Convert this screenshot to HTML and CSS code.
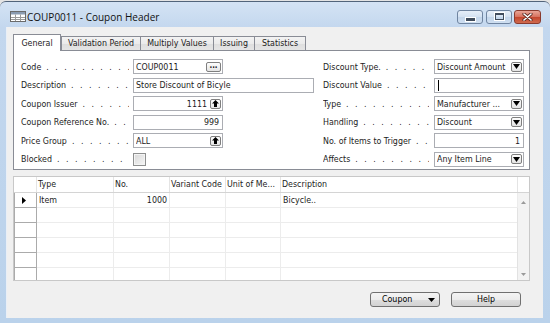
FILE: index.html
```html
<!DOCTYPE html>
<html lang="en">
<head>
    <meta charset="UTF-8">
    <meta name="viewport" content="width=device-width, initial-scale=1.0">
    <title>COUP0011 - Coupon Header</title>
    <link rel="stylesheet" href="styles.css">
</head>
<body>
    <div class="window">
        <div class="titlebar">
            <svg class="app-icon" width="16" height="11" viewBox="0 0 16 11">
                <rect x="0.5" y="0.5" width="15" height="10" fill="#fff" stroke="#6b6b6b"/>
                <rect x="1" y="1" width="14" height="2.5" fill="#8a9bb1"/>
                <path d="M1 6.5H15M1 8.5H15M5.5 3.5V10M10.5 3.5V10" stroke="#9a9a9a" stroke-width="1"/>
            </svg>
            <span class="title">COUP0011 - Coupon Header</span>
            <div class="caption">
                <span class="cap cap-min"><i></i></span>
                <span class="cap cap-max"><i></i></span>
                <span class="cap cap-close">
                    <svg width="11" height="8" viewBox="0 0 11 8">
                        <path d="M2 1L9 7M9 1L2 7" stroke="#5a2a22" stroke-width="3.2" stroke-linecap="round"/>
                        <path d="M2 1L9 7M9 1L2 7" stroke="#fff" stroke-width="1.6" stroke-linecap="round"/>
                    </svg>
                </span>
            </div>
        </div>

        <div class="client">
            <div class="tabs">
                <span class="tab active">General</span>
                <span class="tab">Validation Period</span>
                <span class="tab">Multiply Values</span>
                <span class="tab">Issuing</span>
                <span class="tab last">Statistics</span>
            </div>

            <div class="panel">
                <!-- linke Spalte -->
                <div class="col col-left">
                    <div class="row">
                        <span class="lbl">Code</span>
                        <span class="fld"><span class="v">COUP0011</span><span class="fb fb-wide">...</span></span>
                    </div>
                    <div class="row">
                        <span class="lbl">Description</span>
                        <span class="fld fld-wide"><span class="v">Store Discount of Bicyle</span></span>
                    </div>
                    <div class="row">
                        <span class="lbl">Coupon Issuer</span>
                        <span class="fld num"><span class="v">1111</span><span class="fb"><svg width="7" height="7" viewBox="0 0 7 7"><path d="M3.5 0L7 3.5H5V7H2V3.5H0Z" fill="#000"/></svg></span></span>
                    </div>
                    <div class="row">
                        <span class="lbl">Coupon Reference No.</span>
                        <span class="fld num"><span class="v">999</span></span>
                    </div>
                    <div class="row">
                        <span class="lbl">Price Group</span>
                        <span class="fld"><span class="v">ALL</span><span class="fb"><svg width="7" height="7" viewBox="0 0 7 7"><path d="M3.5 0L7 3.5H5V7H2V3.5H0Z" fill="#000"/></svg></span></span>
                    </div>
                    <div class="row">
                        <span class="lbl">Blocked</span>
                        <span class="check"></span>
                    </div>
                </div>

                <!-- rechte Spalte -->
                <div class="col col-right">
                    <div class="row">
                        <span class="lbl">Discount Type.</span>
                        <span class="fld"><span class="v">Discount Amount</span><span class="fb"><svg width="7" height="5" viewBox="0 0 7 5"><path d="M0 0H7L3.5 5Z" fill="#000"/></svg></span></span>
                    </div>
                    <div class="row">
                        <span class="lbl">Discount Value</span>
                        <span class="fld"><span class="cursor"></span></span>
                    </div>
                    <div class="row">
                        <span class="lbl">Type</span>
                        <span class="fld"><span class="v">Manufacturer ...</span><span class="fb"><svg width="7" height="5" viewBox="0 0 7 5"><path d="M0 0H7L3.5 5Z" fill="#000"/></svg></span></span>
                    </div>
                    <div class="row">
                        <span class="lbl">Handling</span>
                        <span class="fld"><span class="v">Discount</span><span class="fb"><svg width="7" height="5" viewBox="0 0 7 5"><path d="M0 0H7L3.5 5Z" fill="#000"/></svg></span></span>
                    </div>
                    <div class="row">
                        <span class="lbl">No. of Items to Trigger</span>
                        <span class="fld num"><span class="v">1</span></span>
                    </div>
                    <div class="row">
                        <span class="lbl">Affects</span>
                        <span class="fld"><span class="v">Any Item Line</span><span class="fb"><svg width="7" height="5" viewBox="0 0 7 5"><path d="M0 0H7L3.5 5Z" fill="#000"/></svg></span></span>
                    </div>
                </div>
            </div>

            <div class="lines">
                <table>
                    <colgroup>
                        <col class="c-ind"><col class="c-type"><col class="c-no"><col class="c-var"><col class="c-uom"><col class="c-desc"><col class="c-scroll">
                    </colgroup>
                    <thead>
                        <tr>
                            <th></th><th>Type</th><th>No.</th><th>Variant Code</th><th>Unit of Me...</th><th>Description</th><th></th>
                        </tr>
                    </thead>
                    <tbody>
                        <tr>
                            <td class="ind"><svg width="4" height="7" viewBox="0 0 4 7"><path d="M0 0L4 3.5L0 7Z" fill="#000"/></svg></td>
                            <td>Item</td><td class="r">1000</td><td></td><td></td><td>Bicycle..</td>
                            <td class="scroll" rowspan="6">
                                <div class="scroll-in">
                                    <svg width="5" height="3" viewBox="0 0 5 3"><path d="M0 3L2.5 0L5 3Z" fill="#9a9a9a"/></svg>
                                    <svg width="5" height="3" viewBox="0 0 5 3"><path d="M0 0H5L2.5 3Z" fill="#9a9a9a"/></svg>
                                </div>
                            </td>
                        </tr>
                        <tr><td class="ind"></td><td></td><td></td><td></td><td></td><td></td></tr>
                        <tr><td class="ind"></td><td></td><td></td><td></td><td></td><td></td></tr>
                        <tr><td class="ind"></td><td></td><td></td><td></td><td></td><td></td></tr>
                        <tr><td class="ind"></td><td></td><td></td><td></td><td></td><td></td></tr>
                        <tr><td class="ind"></td><td></td><td></td><td></td><td></td><td></td></tr>
                    </tbody>
                </table>
            </div>

            <div class="buttons">
                <button class="btn btn-menu">Coupon <svg width="7" height="4" viewBox="0 0 7 4"><path d="M0 0H7L3.5 4Z" fill="#000"/></svg></button>
                <button class="btn">Help</button>
            </div>
        </div>
    </div>
</body>
</html>
```

FILE: styles.css
```css
* {margin: 0; padding: 0; box-sizing: border-box;}
body {
    background-color: #e4e4e4;
    font-family: "DejaVu Sans Condensed", "DejaVu Sans", sans-serif;
    font-stretch: condensed;
    font-size: 8.8px;
    color: #1c1c1c;
}
.window {
    width: 550px;
    height: 322px;
    margin-top: 1px;
    display: flex;
    flex-direction: column;
    border-top: 1px solid #52647a;
    border-radius: 6px 6px 0 0;
    background: linear-gradient(#d4e3f4, #c3d7ee 26px, #bad2eb);
}

/* titelleiste */
.titlebar {
    height: 25px;
    display: flex;
    align-items: center;
    padding: 4px 9px 0 10px;
}
.app-icon {
    flex: none;
    margin-right: 1px;
}
.title {
    font-family: "Open Sans", "Liberation Sans", sans-serif;
    font-stretch: normal;
    font-size: 10px;
    color: #111;
    flex: 1;
}
.caption {
    display: flex;
    height: 14px;
}
.cap {
    height: 14px;
    width: 26px;
    border: 1px solid #6f84a0;
    border-radius: 3px;
    background: linear-gradient(#e6eef8, #d3e1f1 50%, #c3d5ea 51%, #cfdff1);
    display: flex;
    align-items: center;
    justify-content: center;
}
.cap-max {margin-left: 3px;}
.cap-close {
    margin-left: 2px;
    width: 27px;
    border-color: #8a3a2e;
    background: linear-gradient(#e9a597, #d6705c 50%, #c4452d 51%, #cf6a4e);
}
.cap-min i {
    width: 9px;
    height: 3px;
    margin-top: 5px;
    background-color: #3f4b5b;
    box-shadow: 0 0 0 1px #fff;
}
.cap-max i {
    width: 9px;
    height: 7px;
    border: 1px solid #3f4b5b;
    border-top-width: 2px;
    box-shadow: 0 0 0 1px #fff;
}

/* arbeitsbereich */
.client {
    flex: 1;
    margin: 0 7px 5px 6px;
    background-color: #f0f0f0;
    border-left: 1px solid #e9eff7;
    padding: 7px 13px 0 6px;
    display: flex;
    flex-direction: column;
}
.tabs {
    display: grid;
    grid-template-columns: 48px 79px 73px 41px 52px;
    align-items: end;
    height: 16px;
}
.tab {
    height: 14px;
    line-height: 13px;
    text-align: center;
    white-space: nowrap;
    border: 1px solid #898c95;
    border-right: none;
    border-bottom: none;
    background: linear-gradient(#f3f3f3, #ebebeb 50%, #dedede 51%, #e5e5e5);
}
.tab.last {border-right: 1px solid #898c95;}
.tab.active {
    position: relative;
    z-index: 1;
    height: 17px;
    margin-bottom: -1px;
    line-height: 16px;
    background: #fff;
    border-right: 1px solid #898c95;
}
.panel {
    height: 120px;
    border: 1px solid #898c95;
    background-color: #fff;
    padding: 8px 5px 0 7px;
    display: flex;
}
.col {
    display: grid;
    grid-auto-rows: 15px;
    row-gap: 3.6px;
}
.col-left {width: 302px;}
.col-right {flex: 1;}
.row {
    display: flex;
    align-items: center;
}
.lbl {
    width: 108px;
    margin-right: 4px;
    overflow: hidden;
    white-space: nowrap;
}
.col-right .lbl {
    width: 106px;
    margin-right: 5px;
}
.lbl::after {
    content: "..............................";
    letter-spacing: 6.5px;
    margin-left: 5px;
}
.fld {
    width: 90px;
    height: 15px;
    border: 1px solid #abadb3;
    background-color: #fff;
    display: flex;
    align-items: center;
    padding: 0 1px 0 2px;
}
.fld-wide {width: 181px;}
.v {
    flex: 1;
    overflow: hidden;
    white-space: nowrap;
}
.num .v {
    text-align: right;
    padding-right: 2px;
}
.fb {
    flex: none;
    width: 11px;
    height: 10px;
    margin-left: 1px;
    border: 1px solid #7f7f7f;
    border-radius: 2px;
    background: linear-gradient(#fdfdfd, #e4e4e4);
    display: flex;
    align-items: center;
    justify-content: center;
    font-size: 8px;
    line-height: 6px;
    font-weight: bold;
}
.fb-wide {
    width: 15px;
    align-items: flex-end;
    padding-bottom: 2px;
}
.cursor {
    width: 1px;
    height: 11px;
    margin-left: 1px;
    background-color: #000;
}
.check {
    width: 13px;
    height: 13px;
    border: 1px solid #8e8f8f;
    background: linear-gradient(135deg, #d8d8d8, #f6f6f6);
    box-shadow: inset 0 0 0 1px #f4f4f4;
}

/* zeilen */
.lines {
    margin-top: 6px;
    width: 517px;
    height: 105px;
    overflow: hidden;
    background-color: #fff;
    border: 1px solid #c8c8c8;
}
table {
    width: 515px;
    border-collapse: collapse;
    table-layout: fixed;
}
.c-ind {width: 22px;}
.c-type {width: 77px;}
.c-no {width: 56px;}
.c-var {width: 56px;}
.c-uom {width: 55px;}
.c-desc {width: 237px;}
.c-scroll {width: 12px;}
tr {height: 15px;}
th, td {
    font-weight: normal;
    text-align: left;
    white-space: nowrap;
    overflow: hidden;
    padding: 0 1px 0 2px;
    line-height: 14px;
}
th {
    border-right: 1px solid #e4e4e4;
    border-bottom: 1px solid #d4d4d4;
    padding-left: 1px;
}
td {
    border-right: 1px solid #ececec;
    border-bottom: 1px solid #ececec;
}
td.r {
    text-align: right;
    padding-right: 2px;
}
td.ind {
    border: 1px solid #ababab;
    padding: 0 0 0 7px;
}
td.ind svg {vertical-align: -1px;}
td.scroll {
    padding: 0;
    background-color: #f3f3f3;
    border-left: 1px solid #e2e2e2;
    vertical-align: top;
}
.scroll-in {
    height: 89px;
    display: flex;
    flex-direction: column;
    justify-content: space-between;
    align-items: center;
    padding: 8px 0 6px;
}

/* schaltflaechen */
.buttons {
    margin: 11px -2px 0 0;
    display: flex;
    justify-content: flex-end;
    gap: 11px;
    padding-right: 11px;
}
.btn {
    width: 70px;
    height: 15px;
    border: 1px solid #707070;
    border-radius: 3px;
    background: linear-gradient(#f4f4f4, #ececec 50%, #dedede 51%, #d2d2d2);
    font-family: inherit;
    font-stretch: condensed;
    font-size: 8.8px;
    line-height: 13px;
    color: #000;
}
.btn-menu {
    display: flex;
    align-items: center;
    padding: 0 4px 0 11px;
}
.btn-menu svg {margin-left: auto;}
```
